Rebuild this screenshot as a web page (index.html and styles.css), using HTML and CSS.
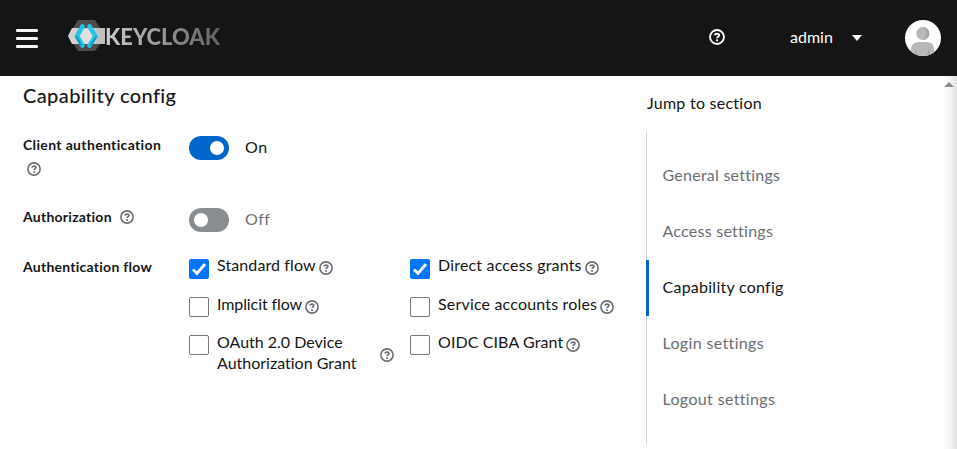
FILE: index.html
```html
<!DOCTYPE html>
<html lang="en">
<head>
<meta charset="utf-8">
<title>Keycloak Administration Console</title>
<link rel="stylesheet" href="styles.css">
</head>
<body>
<svg width="0" height="0" class="defs" aria-hidden="true">
  <symbol id="help" viewBox="0 0 14 14">
    <circle cx="7" cy="7" r="6.1" fill="none" stroke="currentColor" stroke-width="1.6"/>
    <path d="M4.900 5.500C5.200 4.500 6 4.100 7 4.100c1.100 0 1.900.6 1.900 1.500C8.900 6.800 7.100 6.700 7.100 8.100" fill="none" stroke="currentColor" stroke-width="1.700"/>
    <circle cx="7.050" cy="9.900" r="1" fill="currentColor"/>
  </symbol>
</svg>
<header class="masthead">
  <button class="burger" aria-label="Navigation"><i></i><i></i><i></i></button>
  <div class="brand">
    <svg class="mark" width="38" height="32" viewBox="0 0 38 32">
      <path d="M10 0h17l5 8v16l-5 7H10L5 23V8z" fill="#4d4d4d"/>
      <path d="M4 8h33v16H4L0 16z" fill="#d2d2d2"/>
      <path d="M13 9h11l4 7-4 8H13l-5-8z" fill="#e0e0e0"/>
      <path d="M27 8h10v16H27l4-8z" fill="#c0c0c0"/>
      <path d="M14.500 6.500 9 16l5.500 9.500M21.500 6.500 27.500 16l-6 9.500" fill="none" stroke="#28c3e6" stroke-width="4.600" stroke-linecap="round"/>
      <path d="M8 16.500l5.500 9.500M28.500 16.500l-6 9.500" fill="none" stroke="#0d9cc4" stroke-width="2"/>
    </svg>
    <span class="wordmark">KEYCLOAK</span>
  </div>
  <svg class="help header-help"><use href="#help"/></svg>
  <span class="user">admin</span>
  <i class="caret"></i>
  <svg class="avatar" width="36" height="36" viewBox="0 0 36 36">
    <clipPath id="round"><circle cx="18" cy="18" r="18"/></clipPath>
    <g clip-path="url(#round)">
      <path fill="#fff" d="M0 0h36v36H0z"/>
      <path d="M6 36V30c0-5 3-8 8-8h8c5 0 7 3 7 8v6z" fill="#b8b8b8"/>
      <path d="M11 36v-6M24 36v-6" stroke="#a8a8a8" stroke-width="2"/>
      <circle cx="17.700" cy="13.500" r="6.500" fill="#b8b8b8"/>
      <path d="M18 7a6.500 6.500 0 0 1 0 13c4-3 4-9 0-13z" fill="#a8a8a8"/>
    </g>
  </svg>
</header>
<main class="content">
  <section class="form">
    <h1>Capability config</h1>
    <div class="row auth">
      <div class="label"><span class="wide">Client authentication</span><svg class="help below"><use href="#help"/></svg></div>
      <i class="switch on"></i><span class="state">On</span>
    </div>
    <div class="row authz">
      <div class="label">Authorization<svg class="help"><use href="#help"/></svg></div>
      <i class="switch"></i><span class="state off">Off</span>
    </div>
    <div class="row flow">
      <div class="label">Authentication flow</div>
      <div class="options">
        <div class="option first"><i class="box checked"><svg viewBox="0 0 20 20"><path d="M4 10.500 8 14.500 16 5"/></svg></i><span class="snug">Standard flow</span><svg class="help"><use href="#help"/></svg></div>
        <div class="option first"><i class="box checked"><svg viewBox="0 0 20 20"><path d="M4 10.500 8 14.500 16 5"/></svg></i><span class="loose">Direct access grants</span><svg class="help"><use href="#help"/></svg></div>
        <div class="option"><i class="box"></i><span class="tight">Implicit flow</span><svg class="help"><use href="#help"/></svg></div>
        <div class="option"><i class="box"></i><span class="loose">Service accounts roles</span><svg class="help"><use href="#help"/></svg></div>
        <div class="option device"><i class="box"></i><span>OAuth 2.0 Device<br>Authorization Grant</span><svg class="help"><use href="#help"/></svg></div>
        <div class="option"><i class="box"></i><span class="snug">OIDC CIBA Grant</span><svg class="help"><use href="#help"/></svg></div>
      </div>
    </div>
  </section>
  <nav class="jump">
    <div class="title">Jump to section</div>
    <ul>
      <li>General settings</li>
      <li>Access settings</li>
      <li class="current">Capability config</li>
      <li class="wide">Login settings</li>
      <li class="wide">Logout settings</li>
    </ul>
  </nav>
  <div class="scrollbar"><i></i></div>
</main>
</body>
</html>
```
FILE: styles.css
```css
* { box-sizing: border-box; }
body { margin: 0; height: 449px; overflow: hidden; background: #fff; color: #151515; font: 16px/21px Lato, "Liberation Sans", sans-serif; font-variant-ligatures: none; }
.defs { position: absolute; }
i { display: block; flex: none; }
.masthead { display: flex; align-items: center; height: 76px; padding: 0 16px; background: #151515; color: #fff; }
.burger { display: grid; gap: 5px; width: 22px; padding: 0; border: 0; background: none; }
.burger i { height: 3px; border-radius: 1px; background: #f5f5f5; }
.brand { display: flex; align-items: center; width: 153px; margin: -4px 0 0 30px; }
.mark { flex: none; }
.wordmark { margin-left: -1px; padding-top: 1px; font-size: 22px; font-weight: 900; line-height: 32px; background: linear-gradient(90deg, #ccc, #606060); -webkit-background-clip: text; background-clip: text; color: transparent; }
.help { flex: none; width: 14px; height: 14px; color: #6a6e73; }
.header-help { width: 16px; height: 16px; margin: -2px 0 0 488px; color: #fff; }
.user { width: 44px; margin: -4px 0 0 65px; }
.caret { margin-left: 18px; border: 5px solid transparent; border-top: 6px solid #fff; border-bottom: 0; }
.avatar { margin-left: auto; }
.content { display: flex; height: 373px; }
.form { width: 646px; padding: 6px 0 0 23px; }
h1 { margin: 0; font-size: 20px; line-height: 26px; font-weight: 500; letter-spacing: .4px; }
.row { display: flex; }
.auth { height: 72px; margin-top: 28px; }
.authz { height: 50px; }
.label { width: 166px; font-size: 14px; font-weight: 700; line-height: 18px; letter-spacing: .25px; }
.label .help { margin-left: 8px; vertical-align: -2px; }
.label .below { display: block; margin: 8px 0 0 4px; }
.switch { width: 40px; height: 24px; border-radius: 12px; background: #8a8d90; }
.switch::before { content: ""; display: block; width: 14px; height: 14px; margin: 5px; border-radius: 50%; background: #fff; }
.switch.on { background: #06c; }
.switch.on::before { margin-left: 21px; }
.state { margin-left: 16px; letter-spacing: .5px; }
.off { color: #6a6e73; }
.options { display: grid; grid-template-columns: 221px 221px; grid-template-rows: 38px 38px 42px; }
.option { display: flex; align-items: flex-start; }
.option > span { margin-top: -3px; }
.first > span { margin-top: -4px; }
.box { width: 20px; height: 20px; margin: 1px 8px 0 0; border: 1px solid #767676; border-radius: 2px; }
.checked { border: 0; background: #0075ff; }
.box svg { display: block; fill: none; stroke: #fff; stroke-width: 2.8; }
.option .help { margin: 4px 0 0 3px; }
.first .help { margin-top: 3px; }
.device .help { margin: 14px 0 0 auto; }
.device { padding-right: 16px; }
.tight { letter-spacing: -.1px; }
.snug { letter-spacing: .1px; }
.loose { letter-spacing: .18px; }
.jump { width: 296px; padding-top: 16px; letter-spacing: .25px; }
.title { padding-left: 1px; }
.wide { letter-spacing: .35px; }
ul { list-style: none; margin: 19px 0 0; padding: 16px 0; border-left: 1px solid #d2d2d2; height: 312px; }
li { height: 56px; padding: 16px 15.5px; color: #6a6e73; }
.current { margin-left: -1px; border-left: 3px solid #06c; padding-left: 13.5px; color: #151515; }
.scrollbar { width: 15px; padding: 6px 0 0 2px; background: linear-gradient(90deg, #fefefe, #f6f6f6 50%, #e2e2e2); }
.scrollbar i { width: 0; border: 5px solid transparent; border-bottom: 5px solid #8a8a8a; border-top: 0; }
```
